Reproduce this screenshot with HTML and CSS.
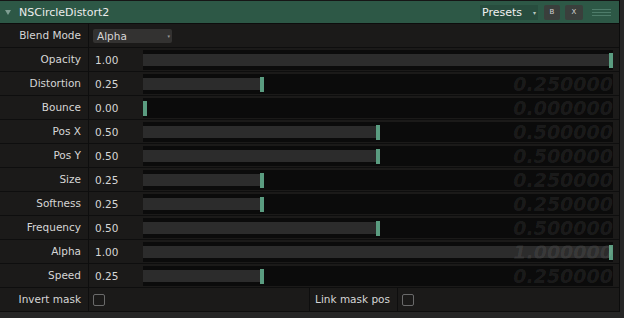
FILE: index.html
```html
<!DOCTYPE html>
<html>
<head>
  <meta charset="UTF-8">
  <title>NSCircleDistort2</title>
  <link rel="stylesheet" href="styles.css">
</head>
<body>
  <div class="panel">
    <div class="header">
      <span class="twirl"></span>
      <span class="title">NSCircleDistort2</span>
      <div class="presets">Presets <span class="caret">&#9662;</span></div>
      <button class="mini-btn">B</button>
      <button class="mini-btn">X</button>
      <div class="grip"><i></i><i></i><i></i></div>
    </div>

    <div class="row">
      <div class="label">Blend Mode</div>
      <div class="field">
        <div class="select">Alpha <span class="caret">&#9662;</span></div>
      </div>
    </div>

    <div class="row">
      <div class="label">Opacity</div>
      <div class="field">
        <span class="value">1.00</span>
        <div class="slider">
          <div class="fill" style="width: calc((100% - 4px) * 1.00 + 4px)"></div>
          <div class="handle" style="left: calc((100% - 4px) * 1.00)"></div>
        </div>
      </div>
    </div>

    <div class="row">
      <div class="label">Distortion</div>
      <div class="field">
        <span class="value">0.25</span>
        <div class="slider">
          <div class="fill" style="width: calc((100% - 4px) * 0.25)"></div>
          <div class="handle" style="left: calc((100% - 4px) * 0.25)"></div>
          <span class="ghost">0.250000</span>
        </div>
      </div>
    </div>

    <div class="row">
      <div class="label">Bounce</div>
      <div class="field">
        <span class="value">0.00</span>
        <div class="slider">
          <div class="fill" style="width: 0"></div>
          <div class="handle" style="left: 0"></div>
          <span class="ghost">0.000000</span>
        </div>
      </div>
    </div>

    <div class="row">
      <div class="label">Pos X</div>
      <div class="field">
        <span class="value">0.50</span>
        <div class="slider">
          <div class="fill" style="width: calc((100% - 4px) * 0.50)"></div>
          <div class="handle" style="left: calc((100% - 4px) * 0.50)"></div>
          <span class="ghost">0.500000</span>
        </div>
      </div>
    </div>

    <div class="row">
      <div class="label">Pos Y</div>
      <div class="field">
        <span class="value">0.50</span>
        <div class="slider">
          <div class="fill" style="width: calc((100% - 4px) * 0.50)"></div>
          <div class="handle" style="left: calc((100% - 4px) * 0.50)"></div>
          <span class="ghost">0.500000</span>
        </div>
      </div>
    </div>

    <div class="row">
      <div class="label">Size</div>
      <div class="field">
        <span class="value">0.25</span>
        <div class="slider">
          <div class="fill" style="width: calc((100% - 4px) * 0.25)"></div>
          <div class="handle" style="left: calc((100% - 4px) * 0.25)"></div>
          <span class="ghost">0.250000</span>
        </div>
      </div>
    </div>

    <div class="row">
      <div class="label">Softness</div>
      <div class="field">
        <span class="value">0.25</span>
        <div class="slider">
          <div class="fill" style="width: calc((100% - 4px) * 0.25)"></div>
          <div class="handle" style="left: calc((100% - 4px) * 0.25)"></div>
          <span class="ghost">0.250000</span>
        </div>
      </div>
    </div>

    <div class="row">
      <div class="label">Frequency</div>
      <div class="field">
        <span class="value">0.50</span>
        <div class="slider">
          <div class="fill" style="width: calc((100% - 4px) * 0.50)"></div>
          <div class="handle" style="left: calc((100% - 4px) * 0.50)"></div>
          <span class="ghost">0.500000</span>
        </div>
      </div>
    </div>

    <div class="row">
      <div class="label">Alpha</div>
      <div class="field">
        <span class="value">1.00</span>
        <div class="slider">
          <div class="fill" style="width: calc((100% - 4px) * 1.00 + 4px)"></div>
          <div class="handle" style="left: calc((100% - 4px) * 1.00)"></div>
          <span class="ghost">1.000000</span>
        </div>
      </div>
    </div>

    <div class="row">
      <div class="label">Speed</div>
      <div class="field">
        <span class="value">0.25</span>
        <div class="slider">
          <div class="fill" style="width: calc((100% - 4px) * 0.25)"></div>
          <div class="handle" style="left: calc((100% - 4px) * 0.25)"></div>
          <span class="ghost">0.250000</span>
        </div>
      </div>
    </div>

    <div class="row">
      <div class="label">Invert mask</div>
      <div class="field checks">
        <span class="check"></span>
        <div class="label inner-label">Link mask pos</div>
        <span class="check"></span>
      </div>
    </div>
  </div>
</body>
</html>
```

FILE: styles.css
```css
body {
  margin: 0;
  background: #262626;
  font-family: "DejaVu Sans", Verdana, sans-serif;
  font-size: 10.5px;
  color: #d6d6d6;
  height: 318px;
  overflow: hidden;
}

.panel {
  width: 619px;
  border-right: 1px solid #0c0c0c;
  background: #1b1a19;
}

/* header bar */
.header {
  height: 22px;
  border-top: 1px solid #161616;
  border-bottom: 1px solid #0d0d0d;
  background: #2d5846;
  display: flex;
  align-items: center;
}

.twirl {
  width: 0;
  height: 0;
  margin-left: 5px;
  border-left: 3px solid transparent;
  border-right: 3px solid transparent;
  border-top: 5px solid #7e9e92;
}

.title {
  margin-left: 8px;
  font-size: 11px;
  color: #ececec;
}

.presets {
  margin-left: auto;
  width: 54px;
  height: 15px;
  padding-left: 2px;
  padding-right: 2px;
  background: #284d3e;
  color: #f0f0f0;
  font-size: 11px;
  line-height: 15px;
  display: flex;
  justify-content: space-between;
}

.presets .caret {
  font-size: 6px;
  color: #b8c8c0;
}

.mini-btn {
  width: 16px;
  height: 15px;
  margin-left: 6px;
  padding: 0;
  border: none;
  border-radius: 2px;
  background: #3a3f3c;
  color: #d4d4d4;
  font-family: "DejaVu Sans", sans-serif;
  font-size: 7px;
  line-height: 15px;
}

.mini-btn + .mini-btn {
  width: 18px;
  margin-left: 5px;
}

.grip {
  width: 19px;
  margin-left: 9px;
  margin-right: 8px;
  display: flex;
  flex-direction: column;
  gap: 2px;
}

.grip i {
  display: block;
  height: 1px;
  background: #4e7c6a;
}

/* parameter rows */
.row {
  height: 23px;
  border-bottom: 1px solid #0e0e0e;
  display: flex;
  background: #1b1a19;
}

.label {
  width: 81px;
  padding-right: 7px;
  border-right: 1px solid #0e0e0e;
  text-align: right;
  line-height: 23px;
  white-space: nowrap;
}

.field {
  flex: 1;
  display: flex;
  align-items: center;
  padding-left: 6px;
  padding-right: 6px;
}

.value {
  width: 48px;
  flex-shrink: 0;
}

.select {
  width: 75px;
  height: 14px;
  padding-left: 4px;
  margin-left: -2px;
  background: #333231;
  border-radius: 2px;
  line-height: 14px;
  display: flex;
  justify-content: space-between;
}

.select .caret {
  font-size: 5px;
  color: #9a9a9a;
  padding-right: 2px;
}

.slider {
  flex: 1;
  position: relative;
  height: 20px;
  background: #0b0b0b;
}

.fill {
  position: absolute;
  top: 4px;
  left: 0;
  height: 12px;
  background: #2c2c2c;
}

.handle {
  position: absolute;
  top: 3px;
  width: 4px;
  height: 15px;
  background: #5a9c80;
}

.ghost {
  position: absolute;
  right: 0;
  bottom: 0;
  font-size: 19px;
  line-height: 19px;
  font-weight: bold;
  font-style: italic;
  color: rgba(255, 255, 255, 0.08);
  pointer-events: none;
}

/* last row with checkboxes */
.checks {
  padding-left: 4px;
  padding-right: 0;
}

.check {
  width: 10px;
  height: 10px;
  border: 1px solid #6a6a6a;
  border-radius: 2px;
  flex-shrink: 0;
}

.inner-label {
  margin-left: 204px;
  width: 80px;
  border-left: 1px solid #0e0e0e;
  margin-right: 4px;
}
```
